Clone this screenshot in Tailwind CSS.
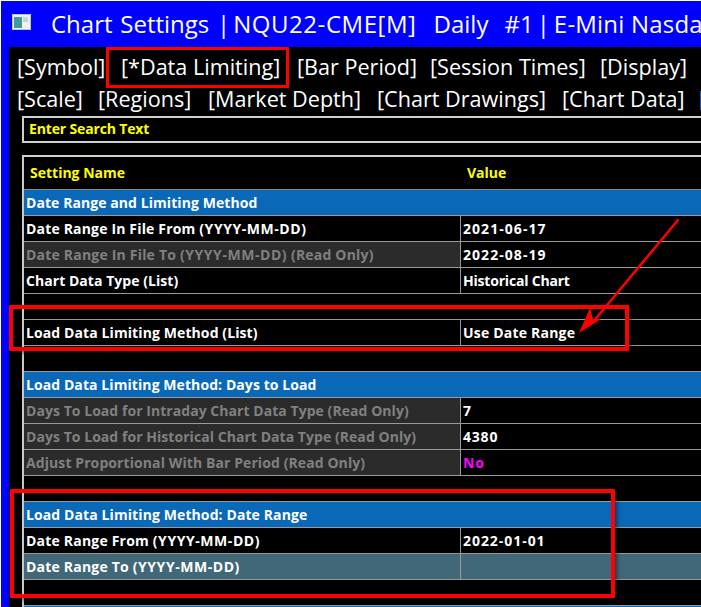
<!DOCTYPE html>
<html><head><meta charset="utf-8"><script src="https://cdn.jsdelivr.net/npm/@tailwindcss/browser@4"></script></head>
<body class="bg-black">
<div class="relative w-[701px] h-[607px] overflow-hidden bg-black font-['Open_Sans','Noto_Sans',sans-serif] border-l border-t border-white">
  <header class="h-[46px] bg-[#0000ff] flex items-center text-white text-[24px] whitespace-pre">
    <svg class="ml-[11px] mt-[-4px] w-[19px] h-[16px] shrink-0" viewBox="0 0 19 16"><rect width="19" height="16" fill="#b8c4d8"/><rect x="1" y="1" width="17" height="14" fill="#eef2f4"/><rect x="2" y="3" width="8" height="11" fill="#3f9a9a"/><rect x="11" y="3" width="5" height="5" fill="#c8d4d8"/></svg>
    <span class="ml-[20px] [word-spacing:1.5px]">Chart Settings |</span><span class="ml-[3px] tracking-[0.55px]">NQU22-CME[M]</span><span class="ml-[17px]">Daily</span><span class="ml-[16px]">#1</span><span class="ml-[3px]">|</span><span class="ml-[4px] tracking-[0.2px]">E-Mini Nasdaq-100 Futures</span>
  </header>
  <div class="flex h-[560px]">
    <div class="w-[8px] bg-[#0000ff] shrink-0"></div>
    <main class="flex-1 min-w-0">
      <nav class="pl-[8px] pt-[4px] text-white text-[21.6px] leading-[32px] whitespace-nowrap">
        <div class="grid grid-cols-[104px_176px_133px_170px_auto] h-[32px]"><span>[Symbol]</span><span>[*Data Limiting]</span><span>[Bar Period]</span><span>[Session Times]</span><span>[Display]</span></div>
        <div class="grid grid-cols-[81px_110px_169px_185px_137px_auto] h-[32px]"><span>[Scale]</span><span>[Regions]</span><span>[Market Depth]</span><span>[Chart Drawings]</span><span>[Chart Data]</span><span>[</span></div>
      </nav>
      <div class="ml-[13px] mt-[1px] h-[27px] border-y-2 border-l-2 border-[#d0d0d0] flex items-center pl-[5px] pb-[3px] text-[#ffff00] text-[14px] font-bold tracking-[-0.15px]">Enter Search Text</div>
      <div class="ml-[13px] mt-[12px] border-l-2 border-[#c8c8c8] text-[14px] font-bold text-white">
        <div class="h-[35px] border-t-2 border-[#d0d0d0] grid grid-cols-[437px_1fr] items-center text-[#ffff00] border-b border-b-[#888] pb-[2px]"><span class="pl-[6px]">Setting Name</span><span class="pl-[6px]">Value</span></div>
        <div class="h-[26px] bg-[#0a68b8] border-b border-[#999] flex items-center pl-[2px] tracking-[0.07px]">Date Range and Limiting Method</div>
        <div class="grid grid-cols-[437px_1fr] h-[26px] border-b border-[#999] leading-[25px]"><span class="pl-[2px] border-r border-[#999] tracking-[0.17px]">Date Range In File From <span class="tracking-[0.55px]">(YYYY-MM-DD)</span></span><span class="pl-[2px] tracking-[1.05px]">2021-06-17</span></div>
        <div class="grid grid-cols-[437px_1fr] h-[26px] border-b border-[#999] leading-[25px]"><span class="pl-[2px] border-r border-[#999] bg-[#2b2b2b] text-[#808080] tracking-[0.2px]">Date Range In File To <span class="tracking-[0.55px]">(YYYY-MM-DD)</span> (Read Only)</span><span class="pl-[2px] tracking-[1.05px]">2022-08-19</span></div>
        <div class="grid grid-cols-[437px_1fr] h-[26px] border-b border-[#999] leading-[25px]"><span class="pl-[2px] border-r border-[#999] tracking-[0.05px]">Chart Data Type (List)</span><span class="pl-[2px] tracking-[-0.2px]">Historical Chart</span></div>
        <div class="h-[26px] border-b border-[#999]"></div>
        <div class="grid grid-cols-[437px_1fr] h-[26px] border-b border-[#999] leading-[25px]"><span class="pl-[2px] border-r border-[#999] tracking-[0.1px]">Load Data Limiting Method (List)</span><span class="pl-[2px] tracking-[0.2px]">Use Date Range</span></div>
        <div class="h-[26px] border-b border-[#999]"></div>
        <div class="h-[26px] bg-[#0a68b8] border-b border-[#999] flex items-center pl-[2px] tracking-[0.08px]">Load Data Limiting Method: Days to Load</div>
        <div class="grid grid-cols-[437px_1fr] h-[26px] border-b border-[#999] leading-[25px]"><span class="pl-[2px] border-r border-[#999] bg-[#2b2b2b] text-[#808080] tracking-[0.05px]">Days To Load for Intraday Chart Data Type (Read Only)</span><span class="pl-[2px]">7</span></div>
        <div class="grid grid-cols-[437px_1fr] h-[26px] border-b border-[#999] leading-[25px]"><span class="pl-[2px] border-r border-[#999] bg-[#2b2b2b] text-[#808080] tracking-[0.05px]">Days To Load for Historical Chart Data Type (Read Only)</span><span class="pl-[2px] tracking-[0.8px]">4380</span></div>
        <div class="grid grid-cols-[437px_1fr] h-[26px] border-b border-[#999] leading-[25px]"><span class="pl-[2px] border-r border-[#999] bg-[#2b2b2b] text-[#808080] tracking-[0.09px]">Adjust Proportional With Bar Period (Read Only)</span><span class="pl-[2px] text-[#ff00ff] tracking-[0.8px]">No</span></div>
        <div class="h-[26px] border-b border-[#999]"></div>
        <div class="h-[26px] bg-[#0a68b8] border-b border-[#999] flex items-center pl-[2px] tracking-[0.1px]">Load Data Limiting Method: Date Range</div>
        <div class="grid grid-cols-[437px_1fr] h-[26px] border-b border-[#999] leading-[25px]"><span class="pl-[2px] border-r border-[#999] tracking-[0.2px]">Date Range From <span class="tracking-[0.55px]">(YYYY-MM-DD)</span></span><span class="pl-[2px] tracking-[0.95px]">2022-01-01</span></div>
        <div class="grid grid-cols-[437px_1fr] h-[26px] border-b border-[#999] leading-[25px] bg-[#416878]"><span class="pl-[2px] border-r border-[#999] tracking-[0.2px]">Date Range To <span class="tracking-[0.55px]">(YYYY-MM-DD)</span></span><span></span></div>
        <div class="h-[26px] border-b border-[#999]"></div>
        <div class="h-[26px] bg-[#0a68b8]"></div>
      </div>
    </main>
  </div>
  <!-- annotations -->
  <div class="absolute left-[105px] top-[46px] w-[183px] h-[41px] border-[3px] border-[#ff0000] shadow-[2px_2px_4px_rgba(0,0,0,.5)]"></div>
  <div class="absolute left-[8px] top-[304px] w-[620px] h-[46px] border-[4px] border-[#ff0000] shadow-[2px_2px_4px_rgba(0,0,0,.5)]"></div>
  <div class="absolute left-[9px] top-[488px] w-[605px] h-[109px] border-[4px] border-[#ff0000] shadow-[2px_2px_4px_rgba(0,0,0,.5)]"></div>
  <svg class="absolute left-0 top-0 w-[701px] h-[607px]" viewBox="0 0 701 607"><line x1="677" y1="219" x2="592" y2="321" stroke="#ff0000" stroke-width="2.5" stroke-linecap="round"/><polygon points="578,332 589,307 592,318 600,318" fill="#ff0000"/></svg>
</div>
</body></html>
